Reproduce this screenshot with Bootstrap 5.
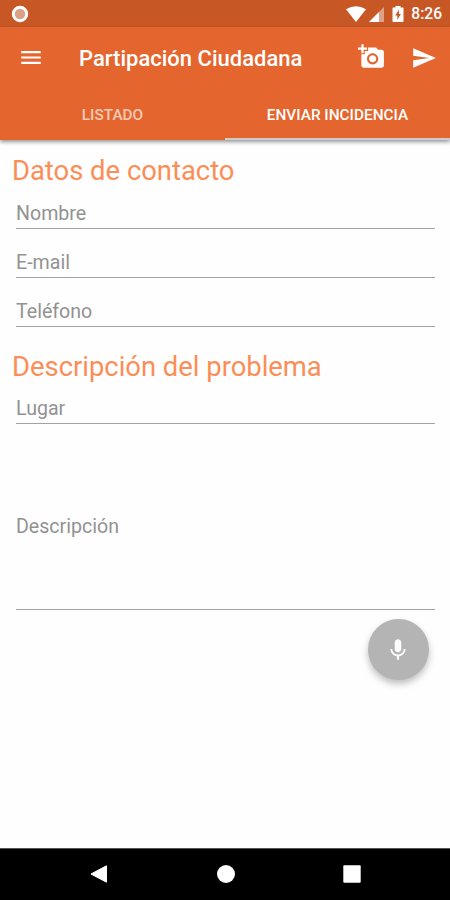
<!DOCTYPE html>
<html lang="es">
<head>
<meta charset="utf-8">
<meta name="viewport" content="width=device-width, initial-scale=1">
<title>Partipación Ciudadana</title>
<link href="https://cdn.jsdelivr.net/npm/bootstrap@5.3.0/dist/css/bootstrap.min.css" rel="stylesheet">
<style>
  body { font-family: Roboto, sans-serif; background: #fefefe; }
  .screen { width: 450px; height: 900px; }
  .status-bar { height: 27px; background: #c75826; padding: 0 8px 0 11px; }
  .status-icons { gap: 2.5px; margin-right: 7px; }
  .battery { margin-left: 5px; }
  .clock { font-size: 15.6px; font-weight: 500; line-height: 27px; padding-top: 1px; }
  .app-header { height: 113px; background: #e4652d; box-shadow: 0 2px 4px rgba(0,0,0,.42); }
  .toolbar { height: 62px; padding: 0 13px 0 18px; }
  .app-title { font-size: 22px; font-weight: 500; line-height: 62px; margin-left: 35px; padding-top: 1px; }
  .send { margin-left: 26.5px; }
  .app-tab { height: 51px; font-size: 15.35px; font-weight: 500; line-height: 51px; padding-top: 1px; color: rgba(255,255,255,.68); border-bottom: 2px solid transparent; text-decoration: none; }
  .app-tab.selected { color: #fff; border-bottom-color: #cfcbc9; }
  .form-area { padding: 13px 15px 0 12px; }
  .section-title { font-size: 27.4px; font-weight: 400; line-height: 36px; color: #fb8e57; margin: 0; }
  .field { height: 49.2px; margin-left: 4px; padding-bottom: 1.7px; border-bottom: 1.6px solid #a3a3a3; font-size: 19.6px; line-height: 24px; color: #929292; }
  .field.first { height: 39.6px; }
  .field.tall { height: 186px; padding-bottom: 70.5px; }
  .second { margin-top: 22.2px; }
  .second + .field { height: 39px; }
  .fab { width: 61px; height: 61px; background: #b4b4b4; margin: 9px 6.5px 0 0; box-shadow: 0 4px 7px rgba(0,0,0,.25); }
  .nav-keys { height: 52px; background: #000; border-top: 1px solid #555; padding: 0 89px 1px 90px; }
</style>
</head>
<body>
<div class="screen d-flex flex-column overflow-hidden">
  <div class="status-bar d-flex align-items-center text-white flex-shrink-0">
    <svg width="18" height="18" viewBox="0 0 18 18"><circle cx="9" cy="9" r="6.7" fill="#dba187" stroke="#fff" stroke-width="3"/></svg>
    <div class="status-icons d-flex align-items-center ms-auto">
      <svg width="20" height="18" viewBox="0 0 20 18"><path d="M0 4.300Q10-1.700 20 4.300L10 17z" fill="#fff"/></svg>
      <svg width="16" height="18" viewBox="0 0 16 18"><path d="M0 17 15 2V17z" fill="#dfa088"/><path d="M0 17 10 7V17z" fill="#fff"/></svg>
      <svg class="battery" width="12" height="18" viewBox="0 0 12 18"><path d="M1.300 2.500H3.500V1H8.500V2.500H10.700Q11.500 2.500 11.500 3.400V16Q11.500 17 10.600 17H1.400Q.5 17 .5 16V3.400Q.5 2.500 1.300 2.500z" fill="#fff"/><path d="M7 4.700 3.200 10.500H5.300V14.800L8.900 9H7z" fill="#c75826"/></svg>
    </div>
    <span class="clock">8:26</span>
  </div>

  <header class="app-header flex-shrink-0 position-relative">
    <div class="toolbar d-flex align-items-center text-white">
      <svg width="26" height="26" viewBox="0 0 24 24" fill="#fff"><path d="M3 17.500h18v-2H3v2zm0-5h18v-2H3v2zm0-7v2h18V5.500H3z"/></svg>
      <h1 class="app-title mb-0">Partipación Ciudadana</h1>
      <svg class="ms-auto mb-1" width="27" height="27" viewBox="0 0 24 24" fill="#fff"><path d="M3 4V1h2v3h3v2H5v3H3V6H0V4h3zm3 6V7h3V4h7l1.830 2H21c1.100 0 2 .9 2 2v12c0 1.100-.9 2-2 2H5c-1.100 0-2-.9-2-2V10h3zm7 9c2.760 0 5-2.240 5-5s-2.240-5-5-5-5 2.240-5 5 2.240 5 5 5zm-3.200-5c0 1.770 1.430 3.200 3.200 3.200s3.200-1.430 3.200-3.200-1.430-3.200-3.200-3.200-3.200 1.430-3.200 3.200z"/></svg>
      <svg class="send" width="26" height="26" viewBox="0 0 24 24" fill="#fff"><path d="M2.010 21 23 12 2.010 3 2 10l15 2-15 2z"/></svg>
    </div>
    <nav class="d-flex text-center">
      <a class="app-tab w-50" href="#">LISTADO</a>
      <a class="app-tab selected w-50" href="#">ENVIAR INCIDENCIA</a>
    </nav>
  </header>

  <main class="form-area flex-grow-1 d-flex flex-column">
    <h2 class="section-title">Datos de contacto</h2>
    <div class="field first d-flex align-items-end">Nombre</div>
    <div class="field d-flex align-items-end">E-mail</div>
    <div class="field d-flex align-items-end">Teléfono</div>
    <h2 class="section-title second">Descripción del problema</h2>
    <div class="field first d-flex align-items-end">Lugar</div>
    <div class="field tall d-flex align-items-end">Descripción</div>
    <button class="fab btn border-0 rounded-circle p-0 align-self-end d-flex align-items-center justify-content-center" aria-label="Dictar">
      <svg width="26" height="26" viewBox="0 0 24 24" fill="#fff"><path d="M12 14c1.660 0 3-1.340 3-3V5c0-1.660-1.340-3-3-3S9 3.340 9 5v6c0 1.660 1.340 3 3 3zm5.300-3c0 3-2.540 5.100-5.300 5.100S6.700 14 6.700 11H5c0 3.410 2.720 6.230 6 6.720V21h2v-3.280c3.280-.48 6-3.300 6-6.720h-1.700z"/></svg>
    </button>
  </main>

  <footer class="nav-keys d-flex align-items-center justify-content-between flex-shrink-0">
    <svg width="18" height="18" viewBox="0 0 18 18"><path d="M1 9 16.500 .8V17.200z" fill="#fff" stroke="#fff" stroke-linejoin="round"/></svg>
    <svg width="18" height="18" viewBox="0 0 18 18"><circle cx="9" cy="9" r="9" fill="#fff"/></svg>
    <svg width="18" height="18" viewBox="0 0 18 18"><rect x=".3" y=".3" width="17.400" height="17.400" rx="1" fill="#fff"/></svg>
  </footer>
</div>
<script src="https://cdn.jsdelivr.net/npm/bootstrap@5.3.0/dist/js/bootstrap.bundle.min.js"></script>
</body>
</html>
